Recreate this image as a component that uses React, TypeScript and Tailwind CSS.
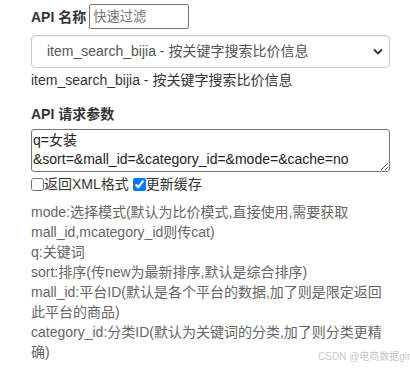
import React from 'react';

const helpLines = [
  'mode:选择模式(默认为比价模式,直接使用,需要获取mall_id,mcategory_id则传cat)',
  'q:关键词',
  'sort:排序(传new为最新排序,默认是综合排序)',
  'mall_id:平台ID(默认是各个平台的数据,加了则是限定返回此平台的商品)',
  'category_id:分类ID(默认为关键词的分类,加了则分类更精确)',
];

export default function App() {
  return (
    <div className="relative w-[410px] h-[370px] overflow-hidden bg-white font-['Liberation_Sans','Noto_Sans_CJK_SC',sans-serif] text-[14px] text-[#333]">
      <div className="pl-[31px] pt-[4px] w-[390px]">
        {/* API 名称 */}
        <div className="flex items-center h-[25px]">
          <label className="font-bold leading-[20px] mr-[3px]">API 名称</label>
          <input
            type="text"
            placeholder="快速过滤"
            className="w-[100px] h-[25px] border border-[#767676] rounded-[2px] px-[3px] text-[13.3px] placeholder:text-[#757575] outline-none"
          />
        </div>

        {/* 选择 API */}
        <div className="relative mt-[6px]">
          <select className="appearance-none w-full h-[33px] border border-[#ccc] rounded-[4px] pl-[15px] text-[14px] text-[#555] bg-white outline-none shadow-[inset_0_1px_1px_rgba(0,0,0,0.075)]">
            <option>item_search_bijia - 按关键字搜索比价信息</option>
          </select>
          <svg
            className="absolute right-[7px] top-[13px] pointer-events-none"
            width="10"
            height="7"
            viewBox="0 0 10 7"
          >
            <path d="M1 1.5 L5 5.5 L9 1.5" fill="none" stroke="#333" strokeWidth="1.8" />
          </svg>
        </div>
        <p className="mt-[2px] leading-[20px]">item_search_bijia - 按关键字搜索比价信息</p>

        {/* API 请求参数 */}
        <p className="mt-[14px] font-bold leading-[20px]">API 请求参数</p>
        <textarea
          rows={2}
          defaultValue={'q=女装\n&sort=&mall_id=&category_id=&mode=&cache=no'}
          className="block mt-[5px] w-full h-[43px] border border-[#767676] rounded-[3px] px-[1px] py-[1px] text-[14px] leading-[19px] text-[#222] outline-none resize-y"
        />

        <div className="flex items-center h-[22px] mt-[1px]">
          <input type="checkbox" className="m-0 w-[13px] h-[13px]" />
          <span>返回XML格式</span>
          <input type="checkbox" defaultChecked className="ml-[4px] m-0 w-[13px] h-[13px] accent-[#0075ff]" />
          <span>更新缓存</span>
        </div>

        {/* 参数说明 */}
        <div className="mt-[7px] w-[352px] text-[#666] leading-[20px]">
          {helpLines.map((l) => (
            <div key={l}>{l}</div>
          ))}
        </div>
      </div>

      <span className="absolute left-[318px] bottom-[6px] whitespace-nowrap text-[10px] text-[#c8c8c8]">
        CSDN @电商数据gir
      </span>
    </div>
  );
}
